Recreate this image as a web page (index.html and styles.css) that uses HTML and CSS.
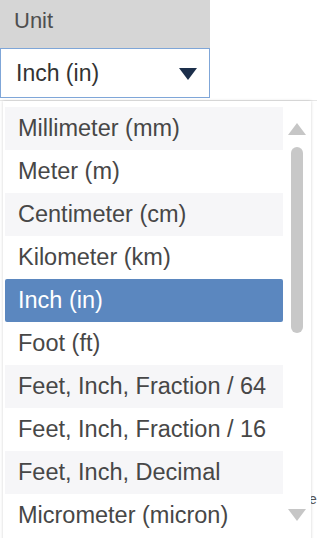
FILE: index.html
```html
<!DOCTYPE html>
<html lang="en">
  <head>
    <meta charset="UTF-8" />
    <meta name="viewport" content="width=device-width, initial-scale=1.0" />
    <title>Unit</title>
    <link rel="stylesheet" href="styles.css">
  </head>
  <body>
    <div class="page">
      <div class="field">
        <div class="field-label">Unit</div>
        <div class="select">
          <span>Inch (in)</span>
          <svg class="caret" width="20" height="14" viewBox="0 0 20 14">
            <path d="M1 1 L19 1 L10 13 Z" fill="#1c2f4b" />
          </svg>
        </div>
      </div>
      <div class="backdrop">
        <span class="behind-text">e</span>
      </div>

      <div class="dropdown">
        <ul class="options">
          <li class="option">Millimeter (mm)</li>
          <li class="option">Meter (m)</li>
          <li class="option">Centimeter (cm)</li>
          <li class="option">Kilometer (km)</li>
          <li class="option selected">Inch (in)</li>
          <li class="option">Foot (ft)</li>
          <li class="option">Feet, Inch, Fraction / 64</li>
          <li class="option">Feet, Inch, Fraction / 16</li>
          <li class="option">Feet, Inch, Decimal</li>
          <li class="option">Micrometer (micron)</li>
        </ul>
        <div class="scrollbar">
          <svg class="arrow" width="20" height="14" viewBox="0 0 20 14">
            <path d="M10 1 L19 13 L1 13 Z" fill="#c6c6c6" />
          </svg>
          <div class="track">
            <div class="thumb"></div>
          </div>
          <svg class="arrow" width="20" height="14" viewBox="0 0 20 14">
            <path d="M1 1 L19 1 L10 13 Z" fill="#c6c6c6" />
          </svg>
        </div>
      </div>
    </div>
  </body>
</html>
```

FILE: styles.css
```css
body {
  font-family: "Liberation Sans", Arial, sans-serif;
  margin: 0;
  padding: 0;
  background-color: white;
  overflow: hidden;
}
.page {
  position: relative;
  width: 317px;
  height: 538px;
}
.field {
  width: 210px;
}
.field-label {
  height: 48px;
  box-sizing: border-box;
  padding: 7px 0 0 14px;
  background-color: #d6d6d6;
  color: #4f4f4f;
  font-size: 22px;
  line-height: 28px;
}
.select {
  height: 50px;
  box-sizing: border-box;
  border: 1px solid #7fa6d8;
  background-color: white;
  display: flex;
  align-items: center;
  justify-content: space-between;
  padding: 0 11px 0 15px;
  color: #333;
  font-size: 23px;
}
.caret {
  display: block;
  margin-top: 1px;
}
.backdrop {
  border-top: 1px solid #e6e6e6;
  margin-top: 2px;
  height: 400px;
  position: relative;
}
.behind-text {
  position: absolute;
  left: 309px;
  top: 390px;
  font-size: 14px;
  color: #555;
}
.dropdown {
  position: absolute;
  left: 3px;
  top: 101px;
  width: 308px;
  height: 450px;
  background-color: white;
  box-shadow: 0 0 3px rgba(0, 0, 0, 0.18);
  display: flex;
}
.options {
  list-style: none;
  margin: 0;
  padding: 6px 0 0 2px;
  width: 280px;
}
.option {
  height: 43px;
  line-height: 43px;
  padding-left: 13px;
  font-size: 23.5px;
  color: #474747;
  white-space: nowrap;
}
.option:nth-child(odd) {
  background-color: #f6f6f8;
}
.option.selected {
  background-color: #5b87bf;
  color: white;
  border-radius: 2px;
}
.scrollbar {
  width: 28px;
  display: flex;
  flex-direction: column;
  align-items: center;
  padding-top: 21px;
}
.arrow {
  display: block;
}
.track {
  height: 372px;
  padding-top: 11px;
  box-sizing: border-box;
}
.thumb {
  width: 12px;
  height: 186px;
  border-radius: 6px;
  background-color: #c8c8c8;
}
```
